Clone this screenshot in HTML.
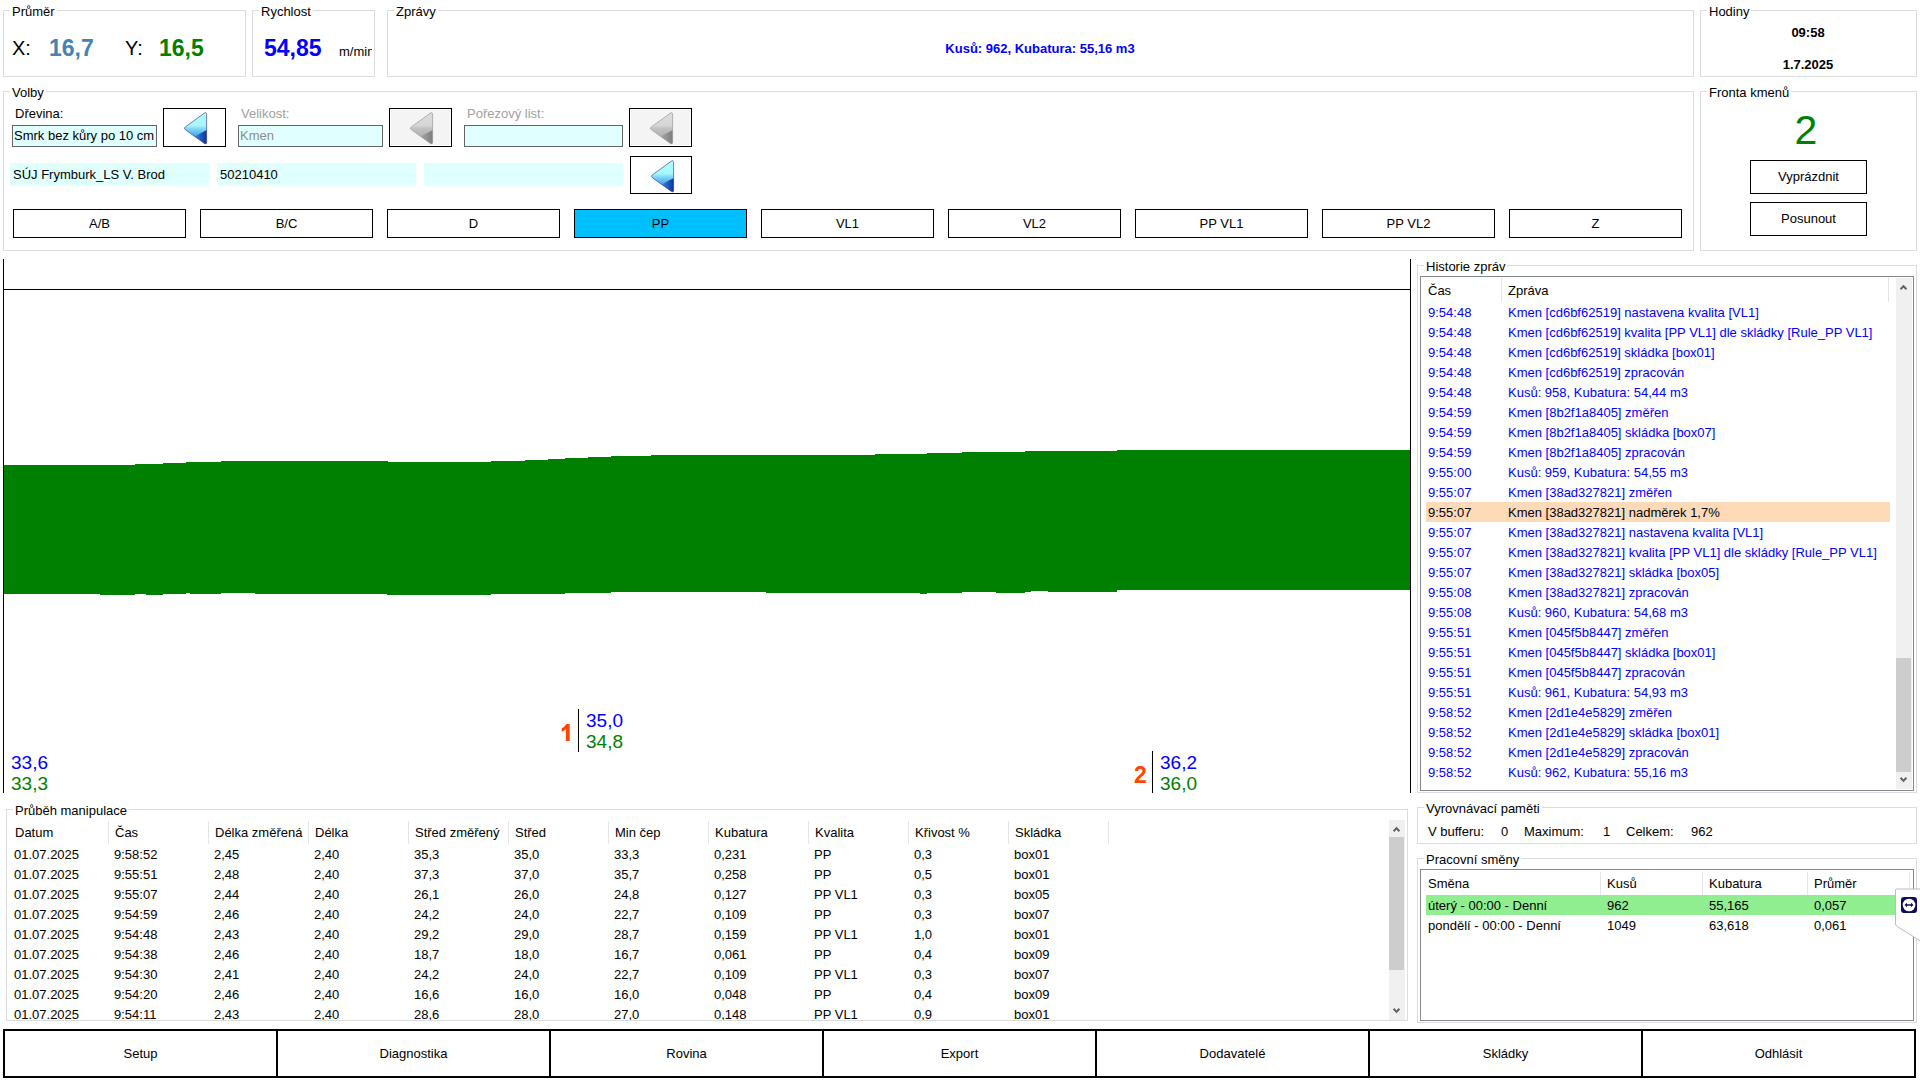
<!DOCTYPE html>
<html><head><meta charset="utf-8"><title>UI</title>
<style>
html,body{margin:0;padding:0;background:#fff;width:1920px;height:1080px;overflow:hidden}
body{position:relative;font-family:"Liberation Sans",sans-serif;font-size:13px;color:#000}
.t{position:absolute;white-space:nowrap;font-size:13px;line-height:15px}
.r{position:absolute;box-sizing:border-box}
.ab{position:absolute;box-sizing:border-box;border:1px solid #000}
.btn{position:absolute;box-sizing:border-box;border:1px solid #000;background:#fff;text-align:center;font-size:13px}
</style></head><body>

<div class="r" style="left:3px;top:10px;width:243px;height:67px;border:1px solid #dcdcdc;background:transparent;"></div>
<div class="t" style="left:10px;top:4px;line-height:15px;padding:0 2px;background:#fff">Průměr</div>
<div class="t" style="left:12px;top:37px;font-size:20px;line-height:22px;color:#000;">X:</div>
<div class="t" style="left:49px;top:35px;font-size:23px;line-height:26px;font-weight:bold;color:#4682b4;">16,7</div>
<div class="t" style="left:125px;top:37px;font-size:20px;line-height:22px;color:#000;">Y:</div>
<div class="t" style="left:159px;top:35px;font-size:23px;line-height:26px;font-weight:bold;color:#008000;">16,5</div>
<div class="r" style="left:252px;top:10px;width:123px;height:67px;border:1px solid #dcdcdc;background:transparent;"></div>
<div class="t" style="left:259px;top:4px;line-height:15px;padding:0 2px;background:#fff">Rychlost</div>
<div class="t" style="left:264px;top:35px;font-size:23px;line-height:26px;font-weight:bold;color:#0000ff;">54,85</div>
<div style="position:absolute;left:330px;top:40px;width:42px;height:24px;overflow:hidden"><div class="t" style="left:9px;top:4px">m/min</div></div>
<div class="r" style="left:387px;top:10px;width:1307px;height:67px;border:1px solid #dcdcdc;background:transparent;"></div>
<div class="t" style="left:394px;top:4px;line-height:15px;padding:0 2px;background:#fff">Zprávy</div>
<div class="t" style="left:840.0px;width:400px;text-align:center;top:41px;font-size:13px;line-height:15px;font-weight:bold;color:#0000ff;">Kusů: 962, Kubatura: 55,16 m3</div>
<div class="r" style="left:1700px;top:10px;width:217px;height:67px;border:1px solid #dcdcdc;background:transparent;"></div>
<div class="t" style="left:1707px;top:4px;line-height:15px;padding:0 2px;background:#fff">Hodiny</div>
<div class="t" style="left:1608.0px;width:400px;text-align:center;top:25px;font-size:13px;line-height:15px;font-weight:bold;color:#000;">09:58</div>
<div class="t" style="left:1608.0px;width:400px;text-align:center;top:57px;font-size:13px;line-height:15px;font-weight:bold;color:#000;">1.7.2025</div>
<div class="r" style="left:3px;top:91px;width:1691px;height:160px;border:1px solid #dcdcdc;background:transparent;"></div>
<div class="t" style="left:10px;top:85px;line-height:15px;padding:0 2px;background:#fff">Volby</div>
<div class="r" style="left:1700px;top:91px;width:217px;height:160px;border:1px solid #dcdcdc;background:transparent;"></div>
<div class="t" style="left:1707px;top:85px;line-height:15px;padding:0 2px;background:#fff">Fronta kmenů</div>
<div class="t" style="left:15px;top:106px;font-size:13px;line-height:15px;color:#000;">Dřevina:</div>
<div class="r" style="left:12px;top:125px;width:145px;height:22px;border:1px solid #646464;background:#e0ffff;overflow:hidden"><div class="t" style="left:1px;top:2px">Smrk bez kůry po 10 cm</div></div>
<div class="ab" style="left:163px;top:108px;width:63px;height:39px;background:#fff">
<div style="position:absolute;left:1px;top:1px;right:1px;bottom:1px;background:#fff"></div>
<svg width="61" height="37" style="position:absolute;left:0;top:0">
<defs>
<linearGradient id="g163_108a" gradientUnits="userSpaceOnUse" x1="0" y1="3.3" x2="0" y2="35.2">
<stop offset="0" stop-color="#b0fcff"/><stop offset="0.42" stop-color="#a8f6ff"/><stop offset="0.5" stop-color="#86dcfa"/><stop offset="0.7" stop-color="#52acee"/><stop offset="1" stop-color="#2f80de"/>
</linearGradient>
<linearGradient id="g163_108b" gradientUnits="userSpaceOnUse" x1="30" y1="0" x2="43" y2="0">
<stop offset="0" stop-color="#3a8ee2"/><stop offset="1" stop-color="#0f2d9e"/>
</linearGradient>
<clipPath id="g163_108c"><path d="M21.36,17.88 L40.13,4.3 Q42.6,2.6 42.6,5.6 L42.6,32.9 Q42.6,35.9 40.12,34.2 L21.36,20.71 Q19.3,19.3 21.36,17.88 Z"/></clipPath>
</defs>
<path d="M21.36,17.88 L40.13,4.3 Q42.6,2.6 42.6,5.6 L42.6,32.9 Q42.6,35.9 40.12,34.2 L21.36,20.71 Q19.3,19.3 21.36,17.88 Z" fill="url(#g163_108a)"/>
<path d="M43,21 C37,23.5 33,26.5 29,28.5 L43,38 Z" fill="url(#g163_108b)" clip-path="url(#g163_108c)"/>
<path d="M21.36,17.88 L40.13,4.3 Q42.6,2.6 42.6,5.6 L42.6,32.9 Q42.6,35.9 40.12,34.2 L21.36,20.71 Q19.3,19.3 21.36,17.88 Z" fill="none" stroke="#4a4a88" stroke-width="0.9" stroke-opacity="0.8"/>
</svg></div>
<div class="t" style="left:241px;top:106px;font-size:13px;line-height:15px;color:#a0a0a0;">Velikost:</div>
<div class="r" style="left:238px;top:125px;width:145px;height:22px;border:1px solid #646464;background:#e0ffff;overflow:hidden"><div class="t" style="left:1px;top:2px;color:#8c8c8c">Kmen</div></div>
<div class="ab" style="left:389px;top:108px;width:63px;height:39px;background:#fff">
<div style="position:absolute;left:1px;top:1px;right:1px;bottom:1px;background:#f4f4f4"></div>
<svg width="61" height="37" style="position:absolute;left:0;top:0">
<defs>
<linearGradient id="g389_108a" gradientUnits="userSpaceOnUse" x1="0" y1="3.3" x2="0" y2="35.2">
<stop offset="0" stop-color="#dcdcdc"/><stop offset="0.42" stop-color="#d6d6d6"/><stop offset="0.5" stop-color="#c2c2c2"/><stop offset="0.7" stop-color="#b4b4b4"/><stop offset="1" stop-color="#a6a6a6"/>
</linearGradient>
<linearGradient id="g389_108b" gradientUnits="userSpaceOnUse" x1="30" y1="0" x2="43" y2="0">
<stop offset="0" stop-color="#a8a8a8"/><stop offset="1" stop-color="#7c7c7c"/>
</linearGradient>
<clipPath id="g389_108c"><path d="M21.36,17.88 L40.13,4.3 Q42.6,2.6 42.6,5.6 L42.6,32.9 Q42.6,35.9 40.12,34.2 L21.36,20.71 Q19.3,19.3 21.36,17.88 Z"/></clipPath>
</defs>
<path d="M21.36,17.88 L40.13,4.3 Q42.6,2.6 42.6,5.6 L42.6,32.9 Q42.6,35.9 40.12,34.2 L21.36,20.71 Q19.3,19.3 21.36,17.88 Z" fill="url(#g389_108a)"/>
<path d="M43,21 C37,23.5 33,26.5 29,28.5 L43,38 Z" fill="url(#g389_108b)" clip-path="url(#g389_108c)"/>
<path d="M21.36,17.88 L40.13,4.3 Q42.6,2.6 42.6,5.6 L42.6,32.9 Q42.6,35.9 40.12,34.2 L21.36,20.71 Q19.3,19.3 21.36,17.88 Z" fill="none" stroke="#9a9a9a" stroke-width="0.9" stroke-opacity="0.8"/>
</svg></div>
<div class="t" style="left:467px;top:106px;font-size:13px;line-height:15px;color:#a0a0a0;">Pořezový list:</div>
<div class="r" style="left:464px;top:125px;width:159px;height:22px;border:1px solid #646464;background:#e0ffff"></div>
<div class="ab" style="left:629px;top:108px;width:63px;height:39px;background:#fff">
<div style="position:absolute;left:1px;top:1px;right:1px;bottom:1px;background:#f4f4f4"></div>
<svg width="61" height="37" style="position:absolute;left:0;top:0">
<defs>
<linearGradient id="g629_108a" gradientUnits="userSpaceOnUse" x1="0" y1="3.3" x2="0" y2="35.2">
<stop offset="0" stop-color="#dcdcdc"/><stop offset="0.42" stop-color="#d6d6d6"/><stop offset="0.5" stop-color="#c2c2c2"/><stop offset="0.7" stop-color="#b4b4b4"/><stop offset="1" stop-color="#a6a6a6"/>
</linearGradient>
<linearGradient id="g629_108b" gradientUnits="userSpaceOnUse" x1="30" y1="0" x2="43" y2="0">
<stop offset="0" stop-color="#a8a8a8"/><stop offset="1" stop-color="#7c7c7c"/>
</linearGradient>
<clipPath id="g629_108c"><path d="M21.36,17.88 L40.13,4.3 Q42.6,2.6 42.6,5.6 L42.6,32.9 Q42.6,35.9 40.12,34.2 L21.36,20.71 Q19.3,19.3 21.36,17.88 Z"/></clipPath>
</defs>
<path d="M21.36,17.88 L40.13,4.3 Q42.6,2.6 42.6,5.6 L42.6,32.9 Q42.6,35.9 40.12,34.2 L21.36,20.71 Q19.3,19.3 21.36,17.88 Z" fill="url(#g629_108a)"/>
<path d="M43,21 C37,23.5 33,26.5 29,28.5 L43,38 Z" fill="url(#g629_108b)" clip-path="url(#g629_108c)"/>
<path d="M21.36,17.88 L40.13,4.3 Q42.6,2.6 42.6,5.6 L42.6,32.9 Q42.6,35.9 40.12,34.2 L21.36,20.71 Q19.3,19.3 21.36,17.88 Z" fill="none" stroke="#9a9a9a" stroke-width="0.9" stroke-opacity="0.8"/>
</svg></div>
<div class="r" style="left:10px;top:163px;width:199px;height:23px;border:none;background:#e0ffff;"></div>
<div class="t" style="left:13px;top:167px;font-size:13px;line-height:15px;color:#000;">SÚJ Frymburk_LS V. Brod</div>
<div class="r" style="left:217px;top:163px;width:199px;height:23px;border:none;background:#e0ffff;"></div>
<div class="t" style="left:220px;top:167px;font-size:13px;line-height:15px;color:#000;">50210410</div>
<div class="r" style="left:424px;top:163px;width:199px;height:23px;border:none;background:#e0ffff;"></div>
<div class="ab" style="left:630px;top:156px;width:62px;height:38px;background:#fff">
<div style="position:absolute;left:1px;top:1px;right:1px;bottom:1px;background:#fff"></div>
<svg width="60" height="36" style="position:absolute;left:0;top:0">
<defs>
<linearGradient id="g630_156a" gradientUnits="userSpaceOnUse" x1="0" y1="3.3" x2="0" y2="35.2">
<stop offset="0" stop-color="#b0fcff"/><stop offset="0.42" stop-color="#a8f6ff"/><stop offset="0.5" stop-color="#86dcfa"/><stop offset="0.7" stop-color="#52acee"/><stop offset="1" stop-color="#2f80de"/>
</linearGradient>
<linearGradient id="g630_156b" gradientUnits="userSpaceOnUse" x1="30" y1="0" x2="43" y2="0">
<stop offset="0" stop-color="#3a8ee2"/><stop offset="1" stop-color="#0f2d9e"/>
</linearGradient>
<clipPath id="g630_156c"><path d="M21.36,17.88 L40.13,4.3 Q42.6,2.6 42.6,5.6 L42.6,32.9 Q42.6,35.9 40.12,34.2 L21.36,20.71 Q19.3,19.3 21.36,17.88 Z"/></clipPath>
</defs>
<path d="M21.36,17.88 L40.13,4.3 Q42.6,2.6 42.6,5.6 L42.6,32.9 Q42.6,35.9 40.12,34.2 L21.36,20.71 Q19.3,19.3 21.36,17.88 Z" fill="url(#g630_156a)"/>
<path d="M43,21 C37,23.5 33,26.5 29,28.5 L43,38 Z" fill="url(#g630_156b)" clip-path="url(#g630_156c)"/>
<path d="M21.36,17.88 L40.13,4.3 Q42.6,2.6 42.6,5.6 L42.6,32.9 Q42.6,35.9 40.12,34.2 L21.36,20.71 Q19.3,19.3 21.36,17.88 Z" fill="none" stroke="#4a4a88" stroke-width="0.9" stroke-opacity="0.8"/>
</svg></div>
<div class="btn" style="left:13px;top:209px;width:173px;height:29px;line-height:27px;background:#fff">A/B</div>
<div class="btn" style="left:200px;top:209px;width:173px;height:29px;line-height:27px;background:#fff">B/C</div>
<div class="btn" style="left:387px;top:209px;width:173px;height:29px;line-height:27px;background:#fff">D</div>
<div class="btn" style="left:574px;top:209px;width:173px;height:29px;line-height:27px;background:#00bfff">PP</div>
<div class="btn" style="left:761px;top:209px;width:173px;height:29px;line-height:27px;background:#fff">VL1</div>
<div class="btn" style="left:948px;top:209px;width:173px;height:29px;line-height:27px;background:#fff">VL2</div>
<div class="btn" style="left:1135px;top:209px;width:173px;height:29px;line-height:27px;background:#fff">PP VL1</div>
<div class="btn" style="left:1322px;top:209px;width:173px;height:29px;line-height:27px;background:#fff">PP VL2</div>
<div class="btn" style="left:1509px;top:209px;width:173px;height:29px;line-height:27px;background:#fff">Z</div>
<div class="t" style="left:1606.0px;width:400px;text-align:center;top:107px;font-size:41px;line-height:46px;color:#008000;">2</div>
<div class="btn" style="left:1750px;top:160px;width:117px;height:34px;line-height:32px">Vyprázdnit</div>
<div class="btn" style="left:1750px;top:202px;width:117px;height:34px;line-height:32px">Posunout</div>
<div class="r" style="left:3px;top:259px;width:1px;height:534px;border:none;background:#000;"></div>
<div class="r" style="left:3px;top:289px;width:1408px;height:1px;border:none;background:#000;"></div>
<div class="r" style="left:1410px;top:259px;width:1px;height:534px;border:none;background:#000;"></div>
<svg width="1920" height="1080" style="position:absolute;left:0;top:0" shape-rendering="crispEdges"><polygon points="4,465 135,465 135,464 163,464 163,463 186,463 186,462 221,462 221,461 388,461 388,462 491,462 491,461 525,461 525,460 548,460 548,459 565,459 565,458 588,458 588,457 611,457 611,456 651,456 651,455 875,455 875,454 927,454 927,453 962,453 962,452 1025,452 1025,451 1117,451 1117,450 1410,450 1410,590 1117,590 1117,592 1048,592 1048,591 1031,591 1031,592 1025,592 1025,593 996,593 996,592 962,592 962,593 927,593 927,594 920,594 920,593 766,593 766,592 611,592 611,593 565,593 565,594 491,594 491,595 387,595 387,594 255,594 255,593 221,593 221,594 190,594 190,593 186,593 186,594 163,594 163,595 146,595 146,594 135,594 135,595 100,595 100,594 4,594" fill="#008000"/></svg>
<div class="t" style="left:11px;top:752px;font-size:19px;line-height:21px;color:#0000ff;">33,6</div>
<div class="t" style="left:11px;top:773px;font-size:19px;line-height:21px;color:#008000;">33,3</div>
<svg width="20" height="30" style="position:absolute;left:555px;top:715px"><path d="M11.5,8.9 L14.7,8.9 L14.7,26.1 L10.8,26.1 L10.8,14.3 Q9,15.8 6.7,16.8 L6.7,13.3 Q9.6,11.8 11.5,8.9 Z" fill="#ff4500"/></svg>
<div class="r" style="left:578px;top:709px;width:1px;height:43px;border:none;background:#000;"></div>
<div class="t" style="left:586px;top:710px;font-size:19px;line-height:21px;color:#0000ff;">35,0</div>
<div class="t" style="left:586px;top:731px;font-size:19px;line-height:21px;color:#008000;">34,8</div>
<div class="t" style="left:1134px;top:762px;font-size:23px;line-height:26px;font-weight:bold;color:#ff4500;">2</div>
<div class="r" style="left:1152px;top:751px;width:1px;height:42px;border:none;background:#000;"></div>
<div class="t" style="left:1160px;top:752px;font-size:19px;line-height:21px;color:#0000ff;">36,2</div>
<div class="t" style="left:1160px;top:773px;font-size:19px;line-height:21px;color:#008000;">36,0</div>
<div class="r" style="left:1417px;top:265px;width:500px;height:528px;border:1px solid #dcdcdc;background:transparent;"></div>
<div class="t" style="left:1424px;top:259px;line-height:15px;padding:0 2px;background:#fff">Historie zpráv</div>
<div class="r" style="left:1420px;top:276px;width:494px;height:515px;border:1px solid #828790;background:transparent;"></div>
<div class="r" style="left:1501px;top:278px;width:1px;height:24px;border:none;background:#e5e5e5;"></div>
<div class="r" style="left:1888px;top:278px;width:1px;height:24px;border:none;background:#e5e5e5;"></div>
<div class="t" style="left:1428px;top:283px;font-size:13px;line-height:15px;color:#000;">Čas</div>
<div class="t" style="left:1508px;top:283px;font-size:13px;line-height:15px;color:#000;">Zpráva</div>
<div class="t" style="left:1428px;top:305px;font-size:13px;line-height:15px;color:#0000ff;">9:54:48</div>
<div class="t" style="left:1508px;top:305px;font-size:13px;line-height:15px;color:#0000ff;">Kmen [cd6bf62519] nastavena kvalita [VL1]</div>
<div class="t" style="left:1428px;top:325px;font-size:13px;line-height:15px;color:#0000ff;">9:54:48</div>
<div class="t" style="left:1508px;top:325px;font-size:13px;line-height:15px;color:#0000ff;">Kmen [cd6bf62519] kvalita [PP VL1] dle skládky [Rule_PP VL1]</div>
<div class="t" style="left:1428px;top:345px;font-size:13px;line-height:15px;color:#0000ff;">9:54:48</div>
<div class="t" style="left:1508px;top:345px;font-size:13px;line-height:15px;color:#0000ff;">Kmen [cd6bf62519] skládka [box01]</div>
<div class="t" style="left:1428px;top:365px;font-size:13px;line-height:15px;color:#0000ff;">9:54:48</div>
<div class="t" style="left:1508px;top:365px;font-size:13px;line-height:15px;color:#0000ff;">Kmen [cd6bf62519] zpracován</div>
<div class="t" style="left:1428px;top:385px;font-size:13px;line-height:15px;color:#0000ff;">9:54:48</div>
<div class="t" style="left:1508px;top:385px;font-size:13px;line-height:15px;color:#0000ff;">Kusů: 958, Kubatura: 54,44 m3</div>
<div class="t" style="left:1428px;top:405px;font-size:13px;line-height:15px;color:#0000ff;">9:54:59</div>
<div class="t" style="left:1508px;top:405px;font-size:13px;line-height:15px;color:#0000ff;">Kmen [8b2f1a8405] změřen</div>
<div class="t" style="left:1428px;top:425px;font-size:13px;line-height:15px;color:#0000ff;">9:54:59</div>
<div class="t" style="left:1508px;top:425px;font-size:13px;line-height:15px;color:#0000ff;">Kmen [8b2f1a8405] skládka [box07]</div>
<div class="t" style="left:1428px;top:445px;font-size:13px;line-height:15px;color:#0000ff;">9:54:59</div>
<div class="t" style="left:1508px;top:445px;font-size:13px;line-height:15px;color:#0000ff;">Kmen [8b2f1a8405] zpracován</div>
<div class="t" style="left:1428px;top:465px;font-size:13px;line-height:15px;color:#0000ff;">9:55:00</div>
<div class="t" style="left:1508px;top:465px;font-size:13px;line-height:15px;color:#0000ff;">Kusů: 959, Kubatura: 54,55 m3</div>
<div class="t" style="left:1428px;top:485px;font-size:13px;line-height:15px;color:#0000ff;">9:55:07</div>
<div class="t" style="left:1508px;top:485px;font-size:13px;line-height:15px;color:#0000ff;">Kmen [38ad327821] změřen</div>
<div class="r" style="left:1426px;top:502px;width:464px;height:20px;border:none;background:#ffdab9;"></div>
<div class="t" style="left:1428px;top:505px;font-size:13px;line-height:15px;color:#000;">9:55:07</div>
<div class="t" style="left:1508px;top:505px;font-size:13px;line-height:15px;color:#000;">Kmen [38ad327821] nadměrek 1,7%</div>
<div class="t" style="left:1428px;top:525px;font-size:13px;line-height:15px;color:#0000ff;">9:55:07</div>
<div class="t" style="left:1508px;top:525px;font-size:13px;line-height:15px;color:#0000ff;">Kmen [38ad327821] nastavena kvalita [VL1]</div>
<div class="t" style="left:1428px;top:545px;font-size:13px;line-height:15px;color:#0000ff;">9:55:07</div>
<div class="t" style="left:1508px;top:545px;font-size:13px;line-height:15px;color:#0000ff;">Kmen [38ad327821] kvalita [PP VL1] dle skládky [Rule_PP VL1]</div>
<div class="t" style="left:1428px;top:565px;font-size:13px;line-height:15px;color:#0000ff;">9:55:07</div>
<div class="t" style="left:1508px;top:565px;font-size:13px;line-height:15px;color:#0000ff;">Kmen [38ad327821] skládka [box05]</div>
<div class="t" style="left:1428px;top:585px;font-size:13px;line-height:15px;color:#0000ff;">9:55:08</div>
<div class="t" style="left:1508px;top:585px;font-size:13px;line-height:15px;color:#0000ff;">Kmen [38ad327821] zpracován</div>
<div class="t" style="left:1428px;top:605px;font-size:13px;line-height:15px;color:#0000ff;">9:55:08</div>
<div class="t" style="left:1508px;top:605px;font-size:13px;line-height:15px;color:#0000ff;">Kusů: 960, Kubatura: 54,68 m3</div>
<div class="t" style="left:1428px;top:625px;font-size:13px;line-height:15px;color:#0000ff;">9:55:51</div>
<div class="t" style="left:1508px;top:625px;font-size:13px;line-height:15px;color:#0000ff;">Kmen [045f5b8447] změřen</div>
<div class="t" style="left:1428px;top:645px;font-size:13px;line-height:15px;color:#0000ff;">9:55:51</div>
<div class="t" style="left:1508px;top:645px;font-size:13px;line-height:15px;color:#0000ff;">Kmen [045f5b8447] skládka [box01]</div>
<div class="t" style="left:1428px;top:665px;font-size:13px;line-height:15px;color:#0000ff;">9:55:51</div>
<div class="t" style="left:1508px;top:665px;font-size:13px;line-height:15px;color:#0000ff;">Kmen [045f5b8447] zpracován</div>
<div class="t" style="left:1428px;top:685px;font-size:13px;line-height:15px;color:#0000ff;">9:55:51</div>
<div class="t" style="left:1508px;top:685px;font-size:13px;line-height:15px;color:#0000ff;">Kusů: 961, Kubatura: 54,93 m3</div>
<div class="t" style="left:1428px;top:705px;font-size:13px;line-height:15px;color:#0000ff;">9:58:52</div>
<div class="t" style="left:1508px;top:705px;font-size:13px;line-height:15px;color:#0000ff;">Kmen [2d1e4e5829] změřen</div>
<div class="t" style="left:1428px;top:725px;font-size:13px;line-height:15px;color:#0000ff;">9:58:52</div>
<div class="t" style="left:1508px;top:725px;font-size:13px;line-height:15px;color:#0000ff;">Kmen [2d1e4e5829] skládka [box01]</div>
<div class="t" style="left:1428px;top:745px;font-size:13px;line-height:15px;color:#0000ff;">9:58:52</div>
<div class="t" style="left:1508px;top:745px;font-size:13px;line-height:15px;color:#0000ff;">Kmen [2d1e4e5829] zpracován</div>
<div class="t" style="left:1428px;top:765px;font-size:13px;line-height:15px;color:#0000ff;">9:58:52</div>
<div class="t" style="left:1508px;top:765px;font-size:13px;line-height:15px;color:#0000ff;">Kusů: 962, Kubatura: 55,16 m3</div>
<div class="r" style="left:1896px;top:278px;width:16px;height:511px;border:none;background:#f0f0f0;"></div>
<div class="r" style="left:1896px;top:658px;width:15px;height:114px;border:none;background:#cdcdcd;"></div>
<svg width="1920" height="1080" style="position:absolute;left:0;top:0"><path d="M1900.6,289.2 L1903.5,286.1 L1906.4,289.2" fill="none" stroke="#606060" stroke-width="2"/><path d="M1900.6,777.8 L1903.5,780.9 L1906.4,777.8" fill="none" stroke="#606060" stroke-width="2"/><path d="M1393.6,831.2 L1396.5,828.1 L1399.4,831.2" fill="none" stroke="#606060" stroke-width="2"/><path d="M1393.6,1008.8 L1396.5,1011.9 L1399.4,1008.8" fill="none" stroke="#606060" stroke-width="2"/></svg>
<div class="r" style="left:1417px;top:807px;width:500px;height:37px;border:1px solid #dcdcdc;background:transparent;"></div>
<div class="t" style="left:1424px;top:801px;line-height:15px;padding:0 2px;background:#fff">Vyrovnávací paměti</div>
<div class="t" style="left:1428px;top:824px;font-size:13px;line-height:15px;color:#000;">V bufferu:</div>
<div class="t" style="left:1501px;top:824px;font-size:13px;line-height:15px;color:#000;">0</div>
<div class="t" style="left:1524px;top:824px;font-size:13px;line-height:15px;color:#000;">Maximum:</div>
<div class="t" style="left:1603px;top:824px;font-size:13px;line-height:15px;color:#000;">1</div>
<div class="t" style="left:1626px;top:824px;font-size:13px;line-height:15px;color:#000;">Celkem:</div>
<div class="t" style="left:1691px;top:824px;font-size:13px;line-height:15px;color:#000;">962</div>
<div class="r" style="left:1417px;top:858px;width:500px;height:165px;border:1px solid #dcdcdc;background:transparent;"></div>
<div class="t" style="left:1424px;top:852px;line-height:15px;padding:0 2px;background:#fff">Pracovní směny</div>
<div class="r" style="left:1420px;top:869px;width:494px;height:152px;border:1px solid #828790;background:transparent;"></div>
<div class="r" style="left:1600px;top:872px;width:1px;height:24px;border:none;background:#e5e5e5;"></div>
<div class="r" style="left:1702px;top:872px;width:1px;height:24px;border:none;background:#e5e5e5;"></div>
<div class="r" style="left:1807px;top:872px;width:1px;height:24px;border:none;background:#e5e5e5;"></div>
<div class="r" style="left:1909px;top:872px;width:1px;height:24px;border:none;background:#e5e5e5;"></div>
<div class="t" style="left:1428px;top:876px;font-size:13px;line-height:15px;color:#000;">Směna</div>
<div class="t" style="left:1607px;top:876px;font-size:13px;line-height:15px;color:#000;">Kusů</div>
<div class="t" style="left:1709px;top:876px;font-size:13px;line-height:15px;color:#000;">Kubatura</div>
<div class="t" style="left:1814px;top:876px;font-size:13px;line-height:15px;color:#000;">Průměr</div>
<div class="r" style="left:1426px;top:895px;width:470px;height:20px;border:none;background:#90ee90;"></div>
<div class="t" style="left:1428px;top:898px;font-size:13px;line-height:15px;color:#000;">úterý - 00:00 - Denní</div>
<div class="t" style="left:1607px;top:898px;font-size:13px;line-height:15px;color:#000;">962</div>
<div class="t" style="left:1709px;top:898px;font-size:13px;line-height:15px;color:#000;">55,165</div>
<div class="t" style="left:1814px;top:898px;font-size:13px;line-height:15px;color:#000;">0,057</div>
<div class="t" style="left:1428px;top:918px;font-size:13px;line-height:15px;color:#000;">pondělí - 00:00 - Denní</div>
<div class="t" style="left:1607px;top:918px;font-size:13px;line-height:15px;color:#000;">1049</div>
<div class="t" style="left:1709px;top:918px;font-size:13px;line-height:15px;color:#000;">63,618</div>
<div class="t" style="left:1814px;top:918px;font-size:13px;line-height:15px;color:#000;">0,061</div>
<svg width="30" height="60" style="position:absolute;left:1892px;top:886px">
<path d="M3.5,3.5 Q3.5,3 6,3 L30,3 L30,56 L6,41 Q3.5,39.5 3.5,38 Z" fill="#fff" stroke="#b8bcc4" stroke-width="1"/>
<rect x="9" y="11" width="16" height="16" rx="3" fill="#0e0e5c"/>
<circle cx="17" cy="19" r="6.3" fill="#fff"/>
<path d="M12.5,19 L15,16.8 L15,18.2 L19,18.2 L19,16.8 L21.5,19 L19,21.2 L19,19.8 L15,19.8 L15,21.2 Z" fill="#0e0e5c"/>
</svg>
<div class="r" style="left:6px;top:809px;width:1402px;height:212px;border:1px solid #dcdcdc;background:transparent;"></div>
<div class="t" style="left:13px;top:803px;line-height:15px;padding:0 2px;background:#fff">Průběh manipulace</div>
<div class="t" style="left:15px;top:825px;font-size:13px;line-height:15px;color:#000;">Datum</div>
<div class="r" style="left:108px;top:821px;width:1px;height:23px;border:none;background:#e5e5e5;"></div>
<div class="t" style="left:115px;top:825px;font-size:13px;line-height:15px;color:#000;">Čas</div>
<div class="r" style="left:208px;top:821px;width:1px;height:23px;border:none;background:#e5e5e5;"></div>
<div class="t" style="left:215px;top:825px;font-size:13px;line-height:15px;color:#000;">Délka změřená</div>
<div class="r" style="left:308px;top:821px;width:1px;height:23px;border:none;background:#e5e5e5;"></div>
<div class="t" style="left:315px;top:825px;font-size:13px;line-height:15px;color:#000;">Délka</div>
<div class="r" style="left:408px;top:821px;width:1px;height:23px;border:none;background:#e5e5e5;"></div>
<div class="t" style="left:415px;top:825px;font-size:13px;line-height:15px;color:#000;">Střed změřený</div>
<div class="r" style="left:508px;top:821px;width:1px;height:23px;border:none;background:#e5e5e5;"></div>
<div class="t" style="left:515px;top:825px;font-size:13px;line-height:15px;color:#000;">Střed</div>
<div class="r" style="left:608px;top:821px;width:1px;height:23px;border:none;background:#e5e5e5;"></div>
<div class="t" style="left:615px;top:825px;font-size:13px;line-height:15px;color:#000;">Min čep</div>
<div class="r" style="left:708px;top:821px;width:1px;height:23px;border:none;background:#e5e5e5;"></div>
<div class="t" style="left:715px;top:825px;font-size:13px;line-height:15px;color:#000;">Kubatura</div>
<div class="r" style="left:808px;top:821px;width:1px;height:23px;border:none;background:#e5e5e5;"></div>
<div class="t" style="left:815px;top:825px;font-size:13px;line-height:15px;color:#000;">Kvalita</div>
<div class="r" style="left:908px;top:821px;width:1px;height:23px;border:none;background:#e5e5e5;"></div>
<div class="t" style="left:915px;top:825px;font-size:13px;line-height:15px;color:#000;">Křivost %</div>
<div class="r" style="left:1008px;top:821px;width:1px;height:23px;border:none;background:#e5e5e5;"></div>
<div class="t" style="left:1015px;top:825px;font-size:13px;line-height:15px;color:#000;">Skládka</div>
<div class="r" style="left:1108px;top:821px;width:1px;height:23px;border:none;background:#e5e5e5;"></div>
<div style="position:absolute;left:7px;top:845px;width:1380px;height:175px;overflow:hidden">
<div class="t" style="left:7px;top:2px">01.07.2025</div>
<div class="t" style="left:107px;top:2px">9:58:52</div>
<div class="t" style="left:207px;top:2px">2,45</div>
<div class="t" style="left:307px;top:2px">2,40</div>
<div class="t" style="left:407px;top:2px">35,3</div>
<div class="t" style="left:507px;top:2px">35,0</div>
<div class="t" style="left:607px;top:2px">33,3</div>
<div class="t" style="left:707px;top:2px">0,231</div>
<div class="t" style="left:807px;top:2px">PP</div>
<div class="t" style="left:907px;top:2px">0,3</div>
<div class="t" style="left:1007px;top:2px">box01</div>
<div class="t" style="left:7px;top:22px">01.07.2025</div>
<div class="t" style="left:107px;top:22px">9:55:51</div>
<div class="t" style="left:207px;top:22px">2,48</div>
<div class="t" style="left:307px;top:22px">2,40</div>
<div class="t" style="left:407px;top:22px">37,3</div>
<div class="t" style="left:507px;top:22px">37,0</div>
<div class="t" style="left:607px;top:22px">35,7</div>
<div class="t" style="left:707px;top:22px">0,258</div>
<div class="t" style="left:807px;top:22px">PP</div>
<div class="t" style="left:907px;top:22px">0,5</div>
<div class="t" style="left:1007px;top:22px">box01</div>
<div class="t" style="left:7px;top:42px">01.07.2025</div>
<div class="t" style="left:107px;top:42px">9:55:07</div>
<div class="t" style="left:207px;top:42px">2,44</div>
<div class="t" style="left:307px;top:42px">2,40</div>
<div class="t" style="left:407px;top:42px">26,1</div>
<div class="t" style="left:507px;top:42px">26,0</div>
<div class="t" style="left:607px;top:42px">24,8</div>
<div class="t" style="left:707px;top:42px">0,127</div>
<div class="t" style="left:807px;top:42px">PP VL1</div>
<div class="t" style="left:907px;top:42px">0,3</div>
<div class="t" style="left:1007px;top:42px">box05</div>
<div class="t" style="left:7px;top:62px">01.07.2025</div>
<div class="t" style="left:107px;top:62px">9:54:59</div>
<div class="t" style="left:207px;top:62px">2,46</div>
<div class="t" style="left:307px;top:62px">2,40</div>
<div class="t" style="left:407px;top:62px">24,2</div>
<div class="t" style="left:507px;top:62px">24,0</div>
<div class="t" style="left:607px;top:62px">22,7</div>
<div class="t" style="left:707px;top:62px">0,109</div>
<div class="t" style="left:807px;top:62px">PP</div>
<div class="t" style="left:907px;top:62px">0,3</div>
<div class="t" style="left:1007px;top:62px">box07</div>
<div class="t" style="left:7px;top:82px">01.07.2025</div>
<div class="t" style="left:107px;top:82px">9:54:48</div>
<div class="t" style="left:207px;top:82px">2,43</div>
<div class="t" style="left:307px;top:82px">2,40</div>
<div class="t" style="left:407px;top:82px">29,2</div>
<div class="t" style="left:507px;top:82px">29,0</div>
<div class="t" style="left:607px;top:82px">28,7</div>
<div class="t" style="left:707px;top:82px">0,159</div>
<div class="t" style="left:807px;top:82px">PP VL1</div>
<div class="t" style="left:907px;top:82px">1,0</div>
<div class="t" style="left:1007px;top:82px">box01</div>
<div class="t" style="left:7px;top:102px">01.07.2025</div>
<div class="t" style="left:107px;top:102px">9:54:38</div>
<div class="t" style="left:207px;top:102px">2,46</div>
<div class="t" style="left:307px;top:102px">2,40</div>
<div class="t" style="left:407px;top:102px">18,7</div>
<div class="t" style="left:507px;top:102px">18,0</div>
<div class="t" style="left:607px;top:102px">16,7</div>
<div class="t" style="left:707px;top:102px">0,061</div>
<div class="t" style="left:807px;top:102px">PP</div>
<div class="t" style="left:907px;top:102px">0,4</div>
<div class="t" style="left:1007px;top:102px">box09</div>
<div class="t" style="left:7px;top:122px">01.07.2025</div>
<div class="t" style="left:107px;top:122px">9:54:30</div>
<div class="t" style="left:207px;top:122px">2,41</div>
<div class="t" style="left:307px;top:122px">2,40</div>
<div class="t" style="left:407px;top:122px">24,2</div>
<div class="t" style="left:507px;top:122px">24,0</div>
<div class="t" style="left:607px;top:122px">22,7</div>
<div class="t" style="left:707px;top:122px">0,109</div>
<div class="t" style="left:807px;top:122px">PP VL1</div>
<div class="t" style="left:907px;top:122px">0,3</div>
<div class="t" style="left:1007px;top:122px">box07</div>
<div class="t" style="left:7px;top:142px">01.07.2025</div>
<div class="t" style="left:107px;top:142px">9:54:20</div>
<div class="t" style="left:207px;top:142px">2,46</div>
<div class="t" style="left:307px;top:142px">2,40</div>
<div class="t" style="left:407px;top:142px">16,6</div>
<div class="t" style="left:507px;top:142px">16,0</div>
<div class="t" style="left:607px;top:142px">16,0</div>
<div class="t" style="left:707px;top:142px">0,048</div>
<div class="t" style="left:807px;top:142px">PP</div>
<div class="t" style="left:907px;top:142px">0,4</div>
<div class="t" style="left:1007px;top:142px">box09</div>
<div class="t" style="left:7px;top:162px">01.07.2025</div>
<div class="t" style="left:107px;top:162px">9:54:11</div>
<div class="t" style="left:207px;top:162px">2,43</div>
<div class="t" style="left:307px;top:162px">2,40</div>
<div class="t" style="left:407px;top:162px">28,6</div>
<div class="t" style="left:507px;top:162px">28,0</div>
<div class="t" style="left:607px;top:162px">27,0</div>
<div class="t" style="left:707px;top:162px">0,148</div>
<div class="t" style="left:807px;top:162px">PP VL1</div>
<div class="t" style="left:907px;top:162px">0,9</div>
<div class="t" style="left:1007px;top:162px">box01</div>
</div>
<div class="r" style="left:1389px;top:820px;width:16px;height:200px;border:none;background:#f0f0f0;"></div>
<div class="r" style="left:1389px;top:837px;width:15px;height:133px;border:none;background:#cdcdcd;"></div>
<svg width="1920" height="1080" style="position:absolute;left:0;top:0"><path d="M1393.6,831.2 L1396.5,828.1 L1399.4,831.2" fill="none" stroke="#606060" stroke-width="2"/><path d="M1393.6,1008.8 L1396.5,1011.9 L1399.4,1008.8" fill="none" stroke="#606060" stroke-width="2"/></svg>
<div class="btn" style="left:3px;top:1029px;width:275px;height:49px;border-width:2px;line-height:45px;background:transparent">Setup</div>
<div class="btn" style="left:276px;top:1029px;width:275px;height:49px;border-width:2px;line-height:45px;background:transparent">Diagnostika</div>
<div class="btn" style="left:549px;top:1029px;width:275px;height:49px;border-width:2px;line-height:45px;background:transparent">Rovina</div>
<div class="btn" style="left:822px;top:1029px;width:275px;height:49px;border-width:2px;line-height:45px;background:transparent">Export</div>
<div class="btn" style="left:1095px;top:1029px;width:275px;height:49px;border-width:2px;line-height:45px;background:transparent">Dodavatelé</div>
<div class="btn" style="left:1368px;top:1029px;width:275px;height:49px;border-width:2px;line-height:45px;background:transparent">Skládky</div>
<div class="btn" style="left:1641px;top:1029px;width:275px;height:49px;border-width:2px;line-height:45px;background:transparent">Odhlásit</div>
</body></html>
